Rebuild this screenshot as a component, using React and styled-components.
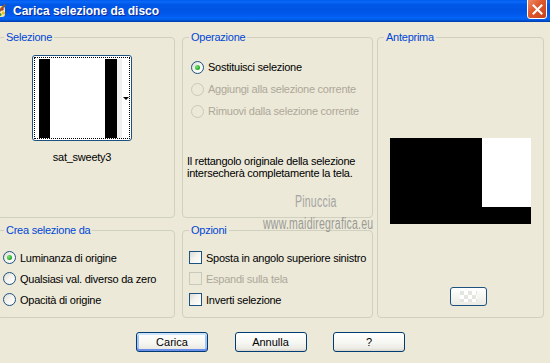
import React from 'react';
import styled, { createGlobalStyle } from 'styled-components';

const GlobalStyle = createGlobalStyle`
  html, body {
    margin: 0;
    padding: 0;
    background: #ECE9D8;
  }
  body {
    font-family: "Liberation Sans", Arial, sans-serif;
    font-size: 11px;
    letter-spacing: -0.25px;
    color: #000;
  }
`;

const Window = styled.div`
  position: relative;
  width: 550px;
  height: 363px;
  overflow: hidden;
  background: #ECE9D8;
`;

const TitleBar = styled.div`
  height: 22px;
  display: flex;
  align-items: center;
  background: linear-gradient(
    to bottom,
    #0058EE 0%,
    #0A6AF8 8%,
    #0058E8 20%,
    #0054E3 45%,
    #0058EC 65%,
    #0563F5 80%,
    #0060EE 88%,
    #0050D2 93%,
    #003CA8 100%
  );
`;

const AppIcon = styled.svg`
  width: 16px;
  height: 16px;
  margin-left: -9px;
  flex-shrink: 0;
`;

const Title = styled.span`
  margin-left: 6px;
  font: bold 12px "Liberation Sans", Arial, sans-serif;
  letter-spacing: 0;
  color: #fff;
  text-shadow: 1px 1px 0 #0A2A9A;
`;

const CloseButton = styled.div`
  margin: -3px 3px 0 auto;
  align-self: flex-start;
  width: 20px;
  height: 22px;
  box-sizing: border-box;
  border: 1px solid #fff;
  border-radius: 3px;
  background: linear-gradient(135deg, #F0906C 0%, #E0592E 45%, #C8401A 100%);
  display: flex;
  align-items: center;
  justify-content: center;
  padding-top: 3px;
`;

const Panels = styled.div`
  display: grid;
  grid-template-columns: 178px 7px 191px 4px 167px;
  grid-template-rows: 187px 94px;
  row-gap: 6px;
  grid-template-areas:
    "sel . op . prev"
    "crea . opz . prev";
  margin: 9px 0 0 -3px;
`;

// fieldset keeps no padding so every legend sits 9px in from the box edge
const Group = styled.fieldset`
  grid-area: ${p => p.$area};
  margin: 0;
  min-width: 0;
  padding: 0;
  border: 1px solid #D0D0BF;
  border-radius: 4px;
  display: flex;
  flex-direction: column;
`;

const Legend = styled.legend`
  margin-left: 6px;
  padding: 0 2px;
  line-height: 13px;
  color: #0046D5;
`;

const GroupBody = styled.div`
  display: flex;
  flex-direction: column;
  align-items: ${p => p.$center ? 'center' : 'stretch'};
  padding: ${p => p.$pad || '0 5px'};
`;

const Thumb = styled.div`
  margin-top: 11px;
  width: 100px;
  height: 86px;
  box-sizing: border-box;
  border: 1px solid #1C5180;
  border-radius: 3px;
  background: #fff;
  padding: 1px;
`;

const FocusRect = styled.div`
  height: 100%;
  box-sizing: border-box;
  border: 1px dotted #000;
  display: flex;
  align-items: center;
  padding: 0 0 0 4px;

  & > * {
    flex-shrink: 0;
  }
`;

const Arrow = styled.span`
  margin-left: 1px;
  width: 0;
  height: 0;
  border-left: 3px solid transparent;
  border-right: 3px solid transparent;
  border-top: 3px solid #000;
`;

const FileName = styled.div`
  margin-top: 10px;
  line-height: 13px;
`;

const OptionList = styled.div`
  display: flex;
  flex-direction: column;
  margin-top: ${p => p.$top}px;
`;

const Option = styled.label`
  display: flex;
  align-items: center;
  gap: 4px;
  height: ${p => p.$h}px;
  color: ${p => p.$disabled ? '#ACA899' : '#000'};
`;

const RadioDot = styled.span`
  width: 13px;
  height: 13px;
  box-sizing: border-box;
  border-radius: 50%;
  border: 1px solid ${p => p.$disabled ? '#CAC8BB' : '#1C5180'};
  background: ${p => p.$disabled
    ? '#ECE9D8'
    : 'linear-gradient(135deg, #DCDAD2 0%, #F4F3EE 45%, #FFFFFF 100%)'};
  display: flex;
  align-items: center;
  justify-content: center;
  flex-shrink: 0;

  &::after {
    content: '';
    display: ${p => p.$checked ? 'block' : 'none'};
    width: 5px;
    height: 5px;
    border-radius: 50%;
    background: radial-gradient(circle at 35% 35%, #7AE87A 0%, #2BB52B 55%, #1C8A1C 100%);
  }
`;

const CheckBox = styled.span`
  width: 13px;
  height: 13px;
  box-sizing: border-box;
  border: 1px solid ${p => p.$disabled ? '#CAC8BB' : '#1C5180'};
  background: ${p => p.$disabled
    ? '#ECE9D8'
    : 'linear-gradient(135deg, #DCDAD2 0%, #F4F3EE 45%, #FFFFFF 100%)'};
  flex-shrink: 0;
`;

const Note = styled.p`
  margin: 33px 0 0 -4px;
  line-height: 12px;
`;

const Preview = styled.svg`
  margin-top: 94px;
  width: 141px;
  height: 86px;
`;

const SwatchButton = styled.div`
  align-self: flex-start;
  margin: 63px 0 0 67px;
  width: 37px;
  height: 19px;
  box-sizing: border-box;
  border: 1px solid #1C5180;
  border-radius: 3px;
  padding: 3px 9px;
  background: linear-gradient(#FFFFFF, #ECEBE4);
`;

const Checker = styled.div`
  height: 100%;
  background: repeating-conic-gradient(#FFFFFF 0 25%, #E4E4E0 0 50%) 0 0 / 8px 8px;
`;

const ButtonRow = styled.div`
  display: flex;
  gap: 26.5px;
  margin: 14px 0 0 136px;
`;

const Button = styled.button`
  width: 72px;
  height: 20px;
  box-sizing: border-box;
  padding: 0;
  border: 1px solid #003C74;
  border-radius: 3px;
  background: linear-gradient(#FFFFFF 0%, #F6F6F2 55%, #ECEBE5 85%, #D8D4CA 100%);
  box-shadow: ${p => p.$default
    ? 'inset 0 2px 0 #CEE3FC, inset 0 -2px 0 #6A8EEA, inset 2px 0 0 #A8C4F4, inset -2px 0 0 #A8C4F4'
    : 'none'};
  font: 11px "Liberation Sans", Arial, sans-serif;
  color: #000;
`;

const Watermark = styled.div`
  position: absolute;
  left: ${p => p.$x}px;
  top: ${p => p.$y}px;
  font: 16px "Liberation Sans", Arial, sans-serif;
  letter-spacing: 0.3px;
  color: ${p => p.$color};
  transform: scaleX(0.66);
  transform-origin: left top;
  white-space: nowrap;
  pointer-events: none;
`;

const Radio = ({ checked, disabled, children, h }) => (
  <Option $disabled={disabled} $h={h}>
    <RadioDot $checked={checked} $disabled={disabled} />
    {children}
  </Option>
);

const Check = ({ disabled, children }) => (
  <Option $disabled={disabled} $h={21}>
    <CheckBox $disabled={disabled} />
    {children}
  </Option>
);

export default function App() {
  return (
    <Window>
      <GlobalStyle />
      <TitleBar>
        <AppIcon viewBox="0 0 16 16">
          <rect x="2" y="3" width="12" height="11" rx="3" fill="#F4E6B0" />
          <circle cx="11" cy="6" r="1.8" fill="#E03020" />
          <circle cx="12.5" cy="10" r="1.6" fill="#F2C000" />
          <circle cx="9" cy="11.5" r="1.5" fill="#3A9A3A" />
          <path d="M13 1 L15 2 L9 9 L8 8 Z" fill="#8A5A2A" />
        </AppIcon>
        <Title>Carica selezione da disco</Title>
        <CloseButton>
          <svg width="11" height="11" viewBox="0 0 11 11">
            <path d="M1.5 1.5 L9.5 9.5 M9.5 1.5 L1.5 9.5" stroke="#fff" strokeWidth="2" strokeLinecap="square" />
          </svg>
        </CloseButton>
      </TitleBar>

      <Panels>
        <Group $area="sel">
          <Legend>Selezione</Legend>
          <GroupBody $center $pad="0 8px 0 0">
            <Thumb>
              <FocusRect>
                <svg width="78" height="79" viewBox="0 0 78 79">
                  <rect width="78" height="79" fill="#fff" />
                  <rect x="0" width="11" height="79" fill="#000" />
                  <rect x="66" width="12" height="79" fill="#000" />
                </svg>
                <svg width="5" height="79" viewBox="0 0 5 79">
                  <rect width="5" height="79" fill="#F0F0F0" />
                </svg>
                <Arrow />
              </FocusRect>
            </Thumb>
            <FileName>sat_sweety3</FileName>
          </GroupBody>
        </Group>

        <Group $area="op">
          <Legend>Operazione</Legend>
          <GroupBody $pad="0 8px">
            <OptionList $top={12}>
              <Radio checked h={22}>Sostituisci selezione</Radio>
              <Radio disabled h={22}>Aggiungi alla selezione corrente</Radio>
              <Radio disabled h={22}>Rimuovi dalla selezione corrente</Radio>
            </OptionList>
            <Note>
              Il rettangolo originale della selezione<br />
              intersecherà completamente la tela.
            </Note>
          </GroupBody>
        </Group>

        <Group $area="prev">
          <Legend>Anteprima</Legend>
          <GroupBody $center>
            <Preview viewBox="0 0 141 86">
              <rect width="141" height="86" fill="#000" />
              <rect x="92" width="49" height="69" fill="#fff" />
            </Preview>
            <SwatchButton>
              <Checker />
            </SwatchButton>
          </GroupBody>
        </Group>

        <Group $area="crea">
          <Legend>Crea selezione da</Legend>
          <GroupBody>
            <OptionList $top={10}>
              <Radio checked h={21}>Luminanza di origine</Radio>
              <Radio h={21}>Qualsiasi val. diverso da zero</Radio>
              <Radio h={21}>Opacità di origine</Radio>
            </OptionList>
          </GroupBody>
        </Group>

        <Group $area="opz">
          <Legend>Opzioni</Legend>
          <GroupBody $pad="0 5px 0 6px">
            <OptionList $top={10}>
              <Check>Sposta in angolo superiore sinistro</Check>
              <Check disabled>Espandi sulla tela</Check>
              <Check>Inverti selezione</Check>
            </OptionList>
          </GroupBody>
        </Group>
      </Panels>

      <ButtonRow>
        <Button $default>Carica</Button>
        <Button>Annulla</Button>
        <Button>?</Button>
      </ButtonRow>

      <Watermark $x={295} $y={193} $color="#A4A4A0">Pinuccia</Watermark>
      <Watermark $x={263} $y={215} $color="#9A9A96">www.maidiregrafica.eu</Watermark>
    </Window>
  );
}
